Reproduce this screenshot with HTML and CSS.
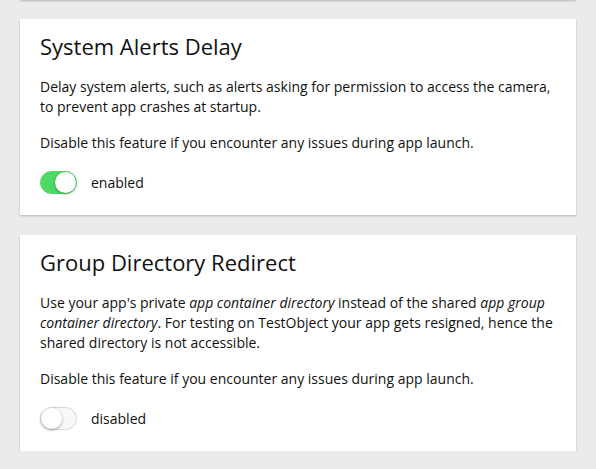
FILE: index.html
```html
<!DOCTYPE html>
<html>
<head>
<meta charset="utf-8">
<link rel="stylesheet" href="styles.css">
</head>
<body>
<div class="list">
  <div class="card card-prev"></div>
  <div class="card">
    <h2 class="title">System Alerts Delay</h2>
    <p class="desc">Delay system alerts, such as alerts asking for permission to access the camera, to prevent app crashes at startup.</p>
    <p class="desc">Disable this feature if you encounter any issues during app launch.</p>
    <label class="toggle-row">
      <span class="toggle on"><span class="knob"></span></span>
      <span class="toggle-label">enabled</span>
    </label>
  </div>
  <div class="card">
    <h2 class="title">Group Directory Redirect</h2>
    <p class="desc">Use your app's private <em>app container directory</em> instead of the shared <em>app group container directory</em>. For testing on TestObject your app gets resigned, hence the shared directory is not accessible.</p>
    <p class="desc">Disable this feature if you encounter any issues during app launch.</p>
    <label class="toggle-row">
      <span class="toggle"><span class="knob"></span></span>
      <span class="toggle-label">disabled</span>
    </label>
  </div>
</div>
</body>
</html>
```
FILE: styles.css
```css
html, body {
  margin: 0;
  padding: 0;
  background: #ebebeb;
  font-family: "Open Sans", "Liberation Sans", sans-serif;
  color: #111;
}
.list {
  display: flex;
  flex-direction: column;
  gap: 20px;
  padding: 0 20px;
  margin-top: -21px;
}
.card {
  background: #fff;
  box-shadow: 0 1px 2px rgba(0,0,0,0.22);
  padding: 13px 20px 21px;
}
.card-prev {
  height: 21px;
  padding: 0;
  margin-bottom: -1px;
  box-sizing: border-box;
}
.title {
  margin: 0 0 17px;
  font-size: 22px;
  font-weight: 400;
  line-height: 28px;
}
.desc {
  margin: 0 0 16px;
  font-size: 14px;
  line-height: 20px;
}
.toggle-row {
  display: flex;
  align-items: center;
  gap: 14px;
  margin-top: 18px;
}
.toggle {
  position: relative;
  width: 37px;
  height: 23px;
  box-sizing: border-box;
  border-radius: 12px;
  background: #f8f8f8;
  border: 1px solid #d6d6d6;
}
.toggle .knob {
  position: absolute;
  top: 0;
  left: 0;
  width: 21px;
  height: 21px;
  border-radius: 50%;
  background: #fff;
  box-shadow: 0 1px 3px rgba(0,0,0,0.35);
}
.toggle.on {
  background: #4cd964;
  border-color: #4cd964;
}
.toggle.on .knob {
  left: 14px;
}
.toggle-label {
  font-size: 14px;
  line-height: 20px;
}
```
